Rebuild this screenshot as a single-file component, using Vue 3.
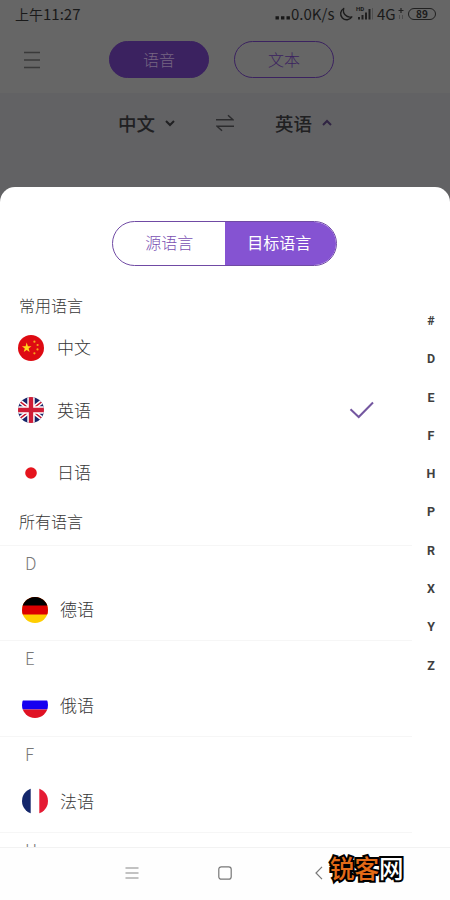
<script setup>
const common = [
  { name: '中文', flag: 'cn' },
  { name: '英语', flag: 'gb', selected: true },
  { name: '日语', flag: 'jp' },
]
const groups = [
  { letter: 'D', name: '德语', flag: 'de' },
  { letter: 'E', name: '俄语', flag: 'ru' },
  { letter: 'F', name: '法语', flag: 'fr' },
  { letter: 'H' },
]
const index = ['#', 'D', 'E', 'F', 'H', 'P', 'R', 'X', 'Y', 'Z']
const flags = {
  cn: `<rect width="26" height="26" fill="#de0a12"/><path fill="#ffd51e" d="M8.700 7.600l1.200 3.600 3.600.1-2.900 2.200 1 3.500-2.900-2.100-3 2.100 1.100-3.500-2.900-2.200 3.700-.1z"/><g fill="#f6a51c"><circle cx="16.400" cy="6.700" r="1.100"/><circle cx="19.600" cy="10" r="1.100"/><circle cx="19.500" cy="14.400" r="1.100"/><circle cx="16.400" cy="18.300" r="1.100"/></g>`,
  gb: `<rect width="26" height="26" fill="#172568"/><path d="M0 3L26 23M26 3L0 23" stroke="#fff" stroke-width="4.500"/><path d="M0 3L26 23M26 3L0 23" stroke="#c9152f" stroke-width="1.400"/><path d="M13 0V26M0 13H26" stroke="#fff" stroke-width="7.400"/><path d="M13 0V26M0 13H26" stroke="#ce1c36" stroke-width="4.400"/>`,
  jp: `<rect width="26" height="26" fill="#fff"/><circle cx="13" cy="13" r="5.800" fill="#e5141d"/>`,
  de: `<rect width="26" height="26" fill="#ffce00"/><rect width="26" height="17.500" fill="#dd0000"/><rect width="26" height="8.500" fill="#000"/>`,
  ru: `<rect width="26" height="26" fill="#fff"/><rect y="8.500" width="26" height="9" fill="#1500f0"/><rect y="17.500" width="26" height="9" fill="#e01224"/>`,
  fr: `<rect width="26" height="26" fill="#fff"/><rect width="8.700" height="26" fill="#14276b"/><rect x="17.300" width="9" height="26" fill="#e51b34"/>`,
}
</script>

<template>
  <main class="phone">
    <header class="top">
      <div class="status">
        <span class="time">上午<span class="digits">11:27</span></span>
        <div class="indicators">
          <svg class="dots" width="16" height="14" viewBox="0 0 16 14"><path d="M.5 8.300h3.400v3.200h-3.400zM6 8.300h3.400v3.200h-3.400zM11.500 8.300h3.400v3.200h-3.400z" fill="#171717"/></svg>
          <span class="speed">0.0K/s</span>
          <svg class="moon" width="15" height="15" viewBox="0 0 15 15"><path d="M5.700 1.500A6 6 0 1 0 13.800 9.800A6.600 6.600 0 0 1 5.700 1.500Z" fill="none" stroke="#1c1c1c" stroke-width="1.400" stroke-linejoin="round"/></svg>
          <div class="signal">
            <span class="hd">HD</span>
            <svg width="17" height="14" viewBox="0 0 17 14"><path d="M1 12.500v-2.500h2v2.500M4.500 12.500V8h2v4.500M8 12.500V5.500h2v7M11.500 12.500V2h2v10.500" fill="#202020"/><path d="M15 12.500V1h1v11.500" fill="#505050"/></svg>
          </div>
          <span class="network">4G</span>
          <svg class="plus" width="6" height="14" viewBox="0 0 6 14"><path d="M3 1v5M.5 3.500h5" stroke="#222" stroke-width="1.200"/><path d="M1.500 8v4M4.500 8v4" stroke="#4c4c4c"/></svg>
          <span class="battery">89</span>
        </div>
      </div>
      <div class="modes">
        <svg class="menu" width="16" height="18" viewBox="0 0 16 18"><path d="M0 1.500h16M0 9h16M0 16.500h16" stroke="#3a3a3a" stroke-width="1.400"/></svg>
        <span class="mode filled">语音</span>
        <span class="mode">文本</span>
      </div>
    </header>

    <div class="pair">
      <span class="lang">中文</span>
      <svg class="down" width="10" height="8" viewBox="0 0 10 8"><path d="M1 2l4 4 4-4" fill="none" stroke="#202022" stroke-width="2"/></svg>
      <svg class="swap" width="18" height="18" viewBox="0 0 18 18"><path d="M0 5.800h17l-5-4.500M18 12.200H1l5 4.500" fill="none" stroke="#2c2c2e" stroke-width="1.500"/></svg>
      <span class="lang">英语</span>
      <svg class="up" width="10" height="8" viewBox="0 0 10 8"><path d="M1 6l4-4 4 4" fill="none" stroke="#302443" stroke-width="2"/></svg>
    </div>

    <section class="sheet">
      <div class="tabs">
        <span class="tab">源语言</span>
        <span class="tab active">目标语言</span>
      </div>
      <div class="content">
        <div class="list">
          <h2 class="heading">常用语言</h2>
          <div v-for="l in common" :key="l.name" class="row">
            <svg class="flag" viewBox="0 0 26 26" v-html="flags[l.flag]"></svg>
            <span class="name">{{ l.name }}</span>
            <svg v-if="l.selected" class="check" width="26" height="18" viewBox="0 0 26 18"><path d="M1.500 8.300l8.200 7.700L24 1.500" fill="none" stroke="#7457a0" stroke-width="2"/></svg>
          </div>
          <h2 class="heading all">所有语言</h2>
          <div v-for="g in groups" :key="g.letter" class="group">
            <div class="letter">{{ g.letter }}</div>
            <div v-if="g.name" class="entry">
              <svg class="flag" viewBox="0 0 26 26" v-html="flags[g.flag]"></svg>
              <span class="name">{{ g.name }}</span>
            </div>
          </div>
        </div>
        <nav class="index"><span v-for="i in index" :key="i">{{ i }}</span></nav>
      </div>
    </section>

    <footer class="system">
      <svg class="recent" width="14" height="12" viewBox="0 0 14 12"><path d="M.5 1h13M.5 6h13M.5 11h13" stroke="#858585" stroke-width="1.200"/></svg>
      <svg class="home" width="14" height="14" viewBox="0 0 14 14"><rect x=".8" y=".8" width="12.400" height="12.400" rx="2.500" fill="none" stroke="#777" stroke-width="1.200"/></svg>
      <svg class="back" width="8" height="14" viewBox="0 0 8 14"><path d="M7 .8L1 7l6 6.200" fill="none" stroke="#777" stroke-width="1.200"/></svg>
      <div class="watermark"><span class="orange">锐客</span><span>网</span></div>
    </footer>
  </main>
</template>

<style>
body { margin: 0; }
</style>

<style scoped>
.phone {
  box-sizing: border-box;
  width: 450px;
  height: 900px;
  overflow: hidden;
  display: flex;
  flex-direction: column;
  background: #626264;
  color: #363636;
  font-family: Roboto, "Noto Sans CJK SC", sans-serif;
  font-weight: 300;
}
.phone svg { display: block; flex: none; }
.top { height: 93px; background: #666; flex: none; }
.status {
  height: 28px;
  display: flex;
  align-items: center;
  justify-content: space-between;
  padding: 0 14px 0 15px;
  color: #1a1a1a;
}
.time { font: 400 14px/28px "Noto Sans CJK SC", sans-serif; }
.digits { font-size: 15px; letter-spacing: 0; }
.indicators { display: flex; align-items: center; height: 28px; }
.dots { margin: 2px 0 0 0; }
.speed { font: 400 15px/28px "Noto Sans CJK SC", sans-serif; width: 47px; white-space: nowrap; }
.moon { margin: 0 4px 0 0; }
.signal { position: relative; width: 17px; margin-right: 3px; }
.hd { position: absolute; left: -1px; top: -2px; font: 700 6px/8px Roboto, sans-serif; }
.network { font: 400 15px/28px "Noto Sans CJK SC", sans-serif; width: 21px; }
.plus { margin-right: 4px; }
.battery {
  box-sizing: border-box;
  width: 28px;
  height: 12px;
  border: 1.500px solid #202020;
  border-radius: 6px;
  text-align: center;
  font: 700 10px/10px "Noto Sans CJK SC", sans-serif;
}
.modes { display: flex; align-items: center; height: 37px; margin-top: 13px; padding-left: 24px; }
.mode {
  box-sizing: border-box;
  width: 100px;
  height: 37px;
  border: 1.500px solid #3b2260;
  border-radius: 19px;
  text-align: center;
  font-size: 16px;
  line-height: 37px;
  color: #3b2260;
  margin-left: 25px;
}
.mode.filled { margin-left: 69px; background: #3b2260; color: #776682; }
.pair { height: 94px; flex: none; box-sizing: border-box; display: flex; align-items: center; padding: 0 0 35px 118px; color: #202022; }
.lang { font-size: 18.500px; font-weight: 500; width: 37px; white-space: nowrap; }
.down { margin-left: 10px; }
.swap { margin: 0 41px 0 41px; width: 18px; }
.up { margin-left: 10px; }
.sheet {
  height: 660px;
  flex: none;
  overflow: hidden;
  background: #fff;
  border-radius: 15px 15px 0 0;
}
.tabs {
  box-sizing: border-box;
  display: flex;
  width: 225px;
  height: 45px;
  margin: 34px 0 0 112px;
  border: 1px solid #704aa4;
  border-radius: 23px;
  overflow: hidden;
}
.tab { box-sizing: border-box; width: 112px; padding-left: 1px; text-align: center; font-size: 16px; line-height: 44px; color: #7950b2; }
.tab.active { background: #8553d2; color: #fff; font-weight: 400; padding: 0 2px 0 0; }
.content { display: flex; }
.list { width: 412px; }
.heading { margin: 0; padding-left: 19px; height: 50.500px; box-sizing: border-box; padding-top: 29px; font-size: 16px; line-height: 24px; font-weight: 300; }
.row { height: 62.500px; display: flex; align-items: center; padding-left: 18px; font-size: 17px; }
.flag { width: 26px; height: 26px; border-radius: 50%; margin-right: 13px; }
.name { line-height: 25px; padding-top: 2px; }
.check { margin-left: auto; margin-right: 37px; }
.heading.all { padding-top: 7px; height: 40.500px; }
.group { height: 95.800px; box-sizing: border-box; border-top: 1px solid #f6f6f6; }
.letter { height: 33.500px; padding-left: 25px; font: 300 17px/33px "Noto Sans CJK SC", sans-serif; color: #777; }
.entry { height: 61px; display: flex; align-items: center; padding-left: 22px; font-size: 17px; }
.entry .flag { margin-right: 12px; }
.index {
  width: 38px;
  padding-top: 36px;
  font: 700 12.500px/38.300px Roboto, sans-serif;
  color: #3f3f3f;
  text-align: center;
}
.index span { display: block; height: 38.300px; }
.system {
  box-sizing: border-box;
  height: 53px;
  flex: none;
  display: flex;
  align-items: center;
  background: #fefefe;
  border-top: 1px solid #f2f2f2;
  padding: 0 0 2px 125px;
}
.home { margin-left: 79px; }
.back { margin-left: 83px; }
.watermark {
  margin: -10px 0 0 7px;
  font: 500 24.500px/30px "Noto Sans CJK SC", sans-serif;
  color: #fff;
  -webkit-text-stroke: 4px #000;
  paint-order: stroke fill;
  white-space: nowrap;
}
.orange { color: #e36b17; }
</style>
